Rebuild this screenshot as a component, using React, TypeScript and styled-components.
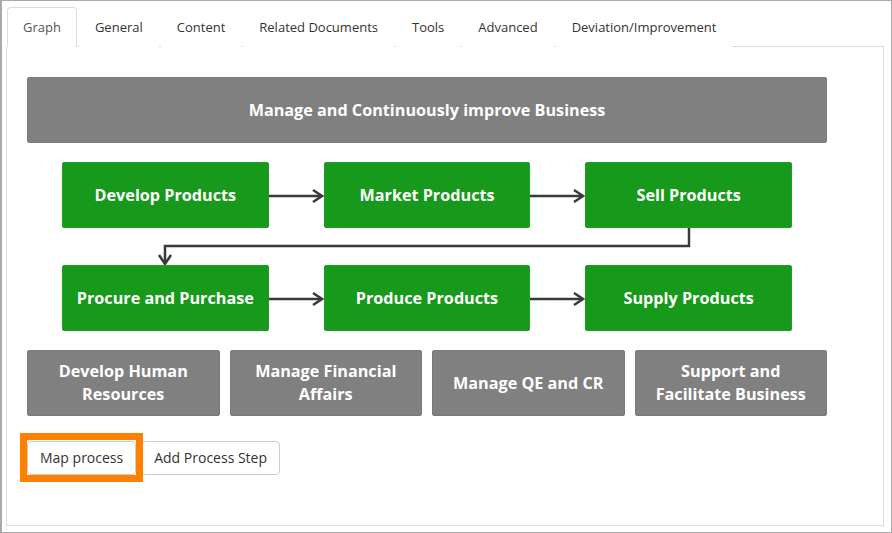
import React from "react";
import styled, { createGlobalStyle } from "styled-components";

const GlobalStyle = createGlobalStyle`
  html, body { margin: 0; padding: 0; background: #ffffff; }
  body { font-family: "Open Sans", "Liberation Sans", sans-serif; }
  * { box-sizing: border-box; }
`;

const Frame = styled.div`
  width: 892px;
  height: 533px;
  border: 1px solid #a9a9a9;
  border-left-width: 2px;
  padding: 6px 7px 6px 4px;
  display: flex;
  flex-direction: column;
  background: #fff;
`;

const TabList = styled.ul`
  list-style: none;
  margin: 0;
  padding: 0 0 0 1px;
  display: flex;
  border-bottom: 1px solid #dddddd;
`;

const Tab = styled.li<{ $active?: boolean }>`
  margin: 0 2px -1px 0;
  padding: 10px 15px 9px;
  font-size: 13px;
  line-height: 19px;
  color: ${(p) => (p.$active ? "#555555" : "#333333")};
  border: 1px solid ${(p) => (p.$active ? "#dddddd" : "transparent")};
  border-bottom-color: ${(p) => (p.$active ? "#ffffff" : "transparent")};
  border-radius: 4px 4px 0 0;
  background: #fff;
  cursor: pointer;
`;

const Panel = styled.div`
  flex: 1;
  border: 1px solid #dddddd;
  border-top: none;
  padding: 30px 0 0 20px;
`;

const Diagram = styled.div`
  width: 800px;
  display: flex;
  flex-direction: column;
`;

const Box = styled.div<{ $tone: "gray" | "green" }>`
  flex: 1;
  height: 66px;
  display: flex;
  align-items: center;
  justify-content: center;
  text-align: center;
  background: ${(p) => (p.$tone === "gray" ? "#808080" : "#179a1b")};
  border: 1px solid ${(p) => (p.$tone === "gray" ? "#7a7a7a" : "#1ba01f")};
  border-radius: 2px;
  color: #ffffff;
  font-family: "Open Sans", "Liberation Sans", sans-serif;
  font-weight: 700;
  font-size: 16.2px;
  line-height: 23px;
`;

const TopBar = styled(Box)`
  flex: none;
  width: 800px;
`;

const FlowRow = styled.div<{ $top: number }>`
  display: flex;
  padding: 0 35px;
  margin-top: ${(p) => p.$top}px;
`;

const SupportRow = styled.div`
  display: flex;
  gap: 10px;
  margin-top: 19px;
`;

const ArrowSlot = styled.svg`
  flex: none;
  width: 55px;
  height: 66px;
  display: block;
`;

const Connector = styled.svg`
  display: block;
  margin: 0 35px;
  width: 730px;
  height: 37px;
`;

const ButtonBar = styled.div`
  display: flex;
  gap: 5px;
  margin-top: 25px;
`;

const Highlight = styled.div`
  position: relative;
  display: flex;
`;

const HighlightRing = styled.span`
  position: absolute;
  top: -8px;
  left: -7px;
  right: -7px;
  bottom: -7px;
  border: 7px solid #ff8000;
  pointer-events: none;
`;

const Button = styled.button`
  font-family: "Open Sans", "Liberation Sans", sans-serif;
  font-size: 14px;
  line-height: 20px;
  padding: 6px 12px;
  color: #333333;
  background: #ffffff;
  border: 1px solid #cccccc;
  border-radius: 4px;
  cursor: pointer;
`;

const ARROW = "#3a3a3a";

const RightArrow = () => (
  <ArrowSlot viewBox="0 0 55 66">
    <line x1="0" y1="34" x2="53" y2="34" stroke={ARROW} strokeWidth="2.5" />
    <polyline points="44,28 53,34 44,40" fill="none" stroke={ARROW} strokeWidth="2.5" />
  </ArrowSlot>
);

const DownConnector = () => (
  <Connector viewBox="0 0 730 37">
    <polyline
      points="627,0 627,18 103,18 103,36"
      fill="none"
      stroke={ARROW}
      strokeWidth="2.5"
    />
    <polyline points="97,27 103,36 109,27" fill="none" stroke={ARROW} strokeWidth="2.5" />
  </Connector>
);

const tabs = [
  "Graph",
  "General",
  "Content",
  "Related Documents",
  "Tools",
  "Advanced",
  "Deviation/Improvement",
];

export default function App() {
  return (
    <>
      <GlobalStyle />
      <Frame>
        <TabList>
          {tabs.map((t, i) => (
            <Tab key={t} $active={i === 0}>
              {t}
            </Tab>
          ))}
        </TabList>
        <Panel>
          <Diagram>
            <TopBar $tone="gray">Manage and Continuously improve Business</TopBar>
            <FlowRow $top={19}>
              <Box $tone="green">Develop Products</Box>
              <RightArrow />
              <Box $tone="green">Market Products</Box>
              <RightArrow />
              <Box $tone="green">Sell Products</Box>
            </FlowRow>
            <DownConnector />
            <FlowRow $top={0}>
              <Box $tone="green">Procure and Purchase</Box>
              <RightArrow />
              <Box $tone="green">Produce Products</Box>
              <RightArrow />
              <Box $tone="green">Supply Products</Box>
            </FlowRow>
            <SupportRow>
              <Box $tone="gray">
                Develop Human
                <br />
                Resources
              </Box>
              <Box $tone="gray">
                Manage Financial
                <br />
                Affairs
              </Box>
              <Box $tone="gray">Manage QE and CR</Box>
              <Box $tone="gray">
                Support and
                <br />
                Facilitate Business
              </Box>
            </SupportRow>
            <ButtonBar>
              <Highlight>
                <Button>Map process</Button>
                <HighlightRing />
              </Highlight>
              <Button>Add Process Step</Button>
            </ButtonBar>
          </Diagram>
        </Panel>
      </Frame>
    </>
  );
}
